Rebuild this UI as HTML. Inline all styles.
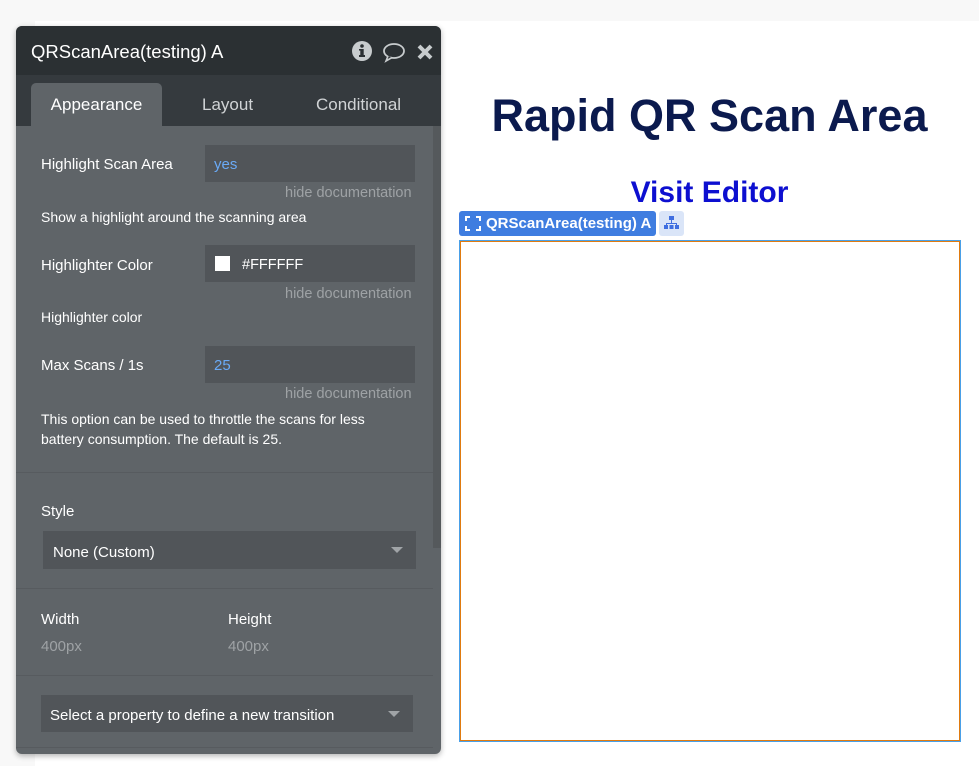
<!DOCTYPE html>
<html><head><meta charset="utf-8"><style>
*{margin:0;padding:0;box-sizing:border-box}
body{width:979px;height:766px;background:#f8f8f8;position:relative;overflow:hidden;font-family:"Liberation Sans",sans-serif}
.a{position:absolute;white-space:nowrap}
.page{position:absolute;left:35px;top:21px;width:944px;height:745px;background:#fff}
.panel{position:absolute;left:16px;top:26px;width:425px;height:728px;background:#5f6468;border-radius:6px;overflow:hidden;box-shadow:0 2px 6px rgba(0,0,0,.3)}
.lbl{color:#fff;font-size:15px;margin-top:2px}
.inp{position:absolute;background:#515559;height:37px}
.doc{color:#9ea2a5;font-size:14.5px;margin-top:2px}
.sep{position:absolute;left:0;width:417px;height:1px;background:#575b5f}
</style></head><body>
<div class="page"></div>
<div class="a" style="left:440px;top:90px;width:539px;text-align:center;font-weight:bold;font-size:45px;color:#0b1a4e">Rapid QR Scan Area</div>
<div class="a" style="left:440px;top:176px;width:539px;text-align:center;font-weight:bold;font-size:30px;color:#0d0fd0">Visit Editor</div>
<div class="a" style="left:459px;top:211px;width:197px;height:25px;background:#3f7de0;border-radius:3px;color:#fff;font-weight:bold;font-size:15px;line-height:26px;padding-left:27px">QRScanArea(testing) A</div>
<svg class="a" style="left:465px;top:216px" width="16" height="15" viewBox="0 0 16 15" fill="none" stroke="#fff" stroke-width="2"><path d="M1 5V1h4M11 1h4v4M15 10v4h-4M5 14H1v-4"/></svg>
<div class="a" style="left:659px;top:211px;width:25px;height:25px;background:#dae5f8;border-radius:3px"></div>
<svg class="a" style="left:663px;top:215px" width="17" height="16" viewBox="0 0 17 16" fill="#3f6ee0"><rect x="6" y="1" width="5" height="4"/><rect x="1" y="10" width="4" height="4"/><rect x="6.5" y="10" width="4" height="4"/><rect x="12" y="10" width="4" height="4"/><path d="M8 5h1v3h5v2h-1V9H4v1H3V8h5z"/></svg>
<div class="a" style="left:459px;top:240px;width:502px;height:502px;border:1px solid #4aa0e8"><div style="position:absolute;inset:0;border:1px solid #e07b10"></div></div>

<div class="panel">
<div class="a" style="left:0;top:0;width:425px;height:49px;background:#2b3033"></div>
<div class="a" style="left:15px;top:15px;color:#fff;font-size:18.5px">QRScanArea(testing) A</div>
<svg class="a" style="left:336px;top:15px" width="22" height="22" viewBox="0 0 22 22"><circle cx="10" cy="10" r="10" fill="#c8ccce"/><rect x="8.3" y="8" width="3.4" height="8" fill="#2b3033"/><rect x="7" y="14" width="6" height="2" fill="#2b3033"/><rect x="7" y="8" width="3" height="1.6" fill="#2b3033"/><circle cx="10" cy="5" r="1.8" fill="#2b3033"/></svg>
<svg class="a" style="left:366px;top:16px" width="24" height="22" viewBox="0 0 24 22"><ellipse cx="12" cy="9" rx="10" ry="7" fill="none" stroke="#c8ccce" stroke-width="1.8"/><path d="M6 14l-2 5 6-3.5" fill="#2b3033" stroke="#c8ccce" stroke-width="1.6"/></svg>
<svg class="a" style="left:400px;top:17px" width="18" height="18" viewBox="0 0 18 18"><path d="M3 3l12 12M15 3L3 15" stroke="#c8ccce" stroke-width="4"/></svg>
<div class="a" style="left:0;top:49px;width:425px;height:51px;background:#353a3e"></div>
<div class="a" style="left:15px;top:57px;width:131px;height:43px;background:#5f6468;border-radius:5px 5px 0 0"></div>
<div class="a" style="left:15px;top:69px;width:131px;text-align:center;color:#fff;font-size:17px">Appearance</div>
<div class="a" style="left:186px;top:69px;color:#d0d3d5;font-size:17px">Layout</div>
<div class="a" style="left:300px;top:69px;color:#d0d3d5;font-size:17px">Conditional</div>
<div class="a" style="left:417px;top:100px;width:8px;height:422px;background:#55595c"></div>

<div class="a lbl" style="left:25px;top:128px">Highlight Scan Area</div>
<div class="inp" style="left:189px;top:119px;width:210px"></div>
<div class="a lbl" style="left:198px;top:128px;color:#6aaaf6">yes</div>
<div class="a doc" style="left:269px;top:157px">hide documentation</div>
<div class="a lbl" style="left:25px;top:181px;font-size:14px">Show a highlight around the scanning area</div>

<div class="a lbl" style="left:25px;top:229px">Highlighter Color</div>
<div class="inp" style="left:189px;top:219px;width:210px"></div>
<div class="a" style="left:199px;top:230px;width:15px;height:15px;background:#fff"></div>
<div class="a lbl" style="left:226px;top:229px;font-size:14.5px">#FFFFFF</div>
<div class="a doc" style="left:269px;top:258px">hide documentation</div>
<div class="a lbl" style="left:25px;top:281px;font-size:14px">Highlighter color</div>

<div class="a lbl" style="left:25px;top:329px">Max Scans / 1s</div>
<div class="inp" style="left:189px;top:320px;width:210px"></div>
<div class="a lbl" style="left:198px;top:329px;color:#6aaaf6">25</div>
<div class="a doc" style="left:269px;top:358px">hide documentation</div>
<div class="a lbl" style="left:25px;top:381px;font-size:14px;line-height:20px">This option can be used to throttle the scans for less<br>battery consumption. The default is 25.</div>

<div class="sep" style="top:446px"></div>
<div class="a lbl" style="left:25px;top:475px">Style</div>
<div class="inp" style="left:27px;top:505px;width:373px;height:38px"></div>
<div class="a lbl" style="left:37px;top:516px">None (Custom)</div>
<div class="a" style="left:375px;top:521px;border-left:6px solid transparent;border-right:6px solid transparent;border-top:6px solid #a0a4a7"></div>
<div class="sep" style="top:562px"></div>
<div class="a lbl" style="left:25px;top:583px">Width</div>
<div class="a doc" style="left:25px;top:610px;font-size:15px">400px</div>
<div class="a lbl" style="left:212px;top:583px">Height</div>
<div class="a doc" style="left:212px;top:610px;font-size:15px">400px</div>
<div class="sep" style="top:649px"></div>
<div class="inp" style="left:25px;top:669px;width:372px"></div>
<div class="a lbl" style="left:34px;top:679px">Select a property to define a new transition</div>
<div class="a" style="left:372px;top:685px;border-left:6px solid transparent;border-right:6px solid transparent;border-top:6px solid #a0a4a7"></div>
<div class="sep" style="top:721px"></div>
</div>
</body></html>
